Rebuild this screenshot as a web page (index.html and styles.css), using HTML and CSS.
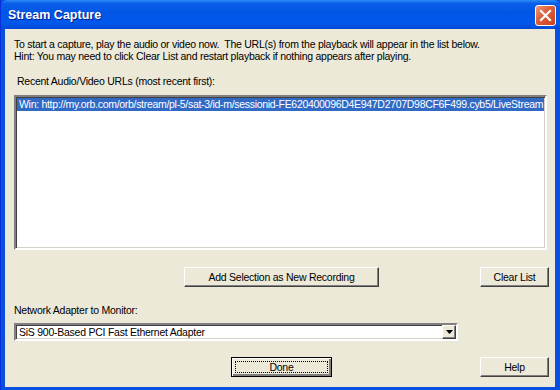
FILE: index.html
```html
<!DOCTYPE html>
<html lang="en">
<head>
    <meta charset="UTF-8">
    <title>Stream Capture</title>
    <link rel="stylesheet" href="styles.css">
</head>
<body>
    <div class="window">
        <div class="titlebar">
            <span class="title">Stream Capture</span>
            <span class="close-btn">
                <svg width="13" height="13" viewBox="0 0 13 13">
                    <path d="M2 2 L11 11 M11 2 L2 11" stroke="#fff" stroke-width="2.2" stroke-linecap="square"/>
                </svg>
            </span>
        </div>

        <div class="client">
            <p class="intro">
                To start a capture, play the audio or video now.&nbsp; The URL(s) from the playback will appear in the list below.<br>
                Hint: You may need to click Clear List and restart playback if nothing appears after playing.
            </p>

            <div class="label label-list">Recent Audio/Video URLs (most recent first):</div>
            <div class="listbox">
                <div class="list-item selected">Win: http://my.orb.com/orb/stream/pl-5/sat-3/id-m/sessionid-FE620400096D4E947D2707D98CF6F499.cyb5/LiveStream</div>
            </div>

            <div class="button-row row-add">
                <span></span>
                <button class="btn btn-add">Add Selection as New Recording</button>
                <button class="btn btn-side">Clear List</button>
            </div>

            <div class="label label-adapter">Network Adapter to Monitor:</div>
            <div class="combo">
                <span class="combo-text">SiS 900-Based PCI Fast Ethernet Adapter</span>
                <span class="combo-arrow">
                    <svg width="7" height="4" viewBox="0 0 7 4"><path d="M0 0 H7 L3.5 4 Z" fill="#000"/></svg>
                </span>
            </div>

            <div class="button-row row-done">
                <span></span>
                <button class="btn btn-done"><span class="focus">Done</span></button>
                <button class="btn btn-side">Help</button>
            </div>
        </div>
    </div>
</body>
</html>
```

FILE: styles.css
```css
body {
    margin: 0;
    width: 560px;
    height: 390px;
    overflow: hidden;
    font-family: "Liberation Sans", Arial, sans-serif;
    font-size: 10.5px;
    letter-spacing: -0.25px;
    color: #000;
}

.window {
    width: 560px;
    height: 390px;
    box-sizing: border-box;
    padding: 0 5px 3px 4px;
    background: #0a50e0;
    border-left: 1px solid #0831d9;
    display: flex;
    flex-direction: column;
}

.titlebar {
    height: 29px;
    flex: none;
    margin: 0 -5px 0 -4px;
    padding: 0 4px 0 7px;
    display: flex;
    align-items: center;
    justify-content: space-between;
    background: linear-gradient(to bottom, #2a8cf7 0%, #0a5ee8 12%, #0055e5 45%, #0058ec 80%, #0048d4 100%);
    border-radius: 6px 6px 0 0;
}

.title {
    color: #fff;
    font-weight: bold;
    font-size: 12.5px;
    letter-spacing: 0;
    text-shadow: 1px 1px 0 #0a1e8c;
    padding-top: 1px;
}

.close-btn {
    width: 19px;
    height: 19px;
    margin-top: 1px;
    border: 1px solid #fff;
    border-radius: 3px;
    background: linear-gradient(135deg, #f09a7a 0%, #e0603a 40%, #c8401c 100%);
    display: flex;
    align-items: center;
    justify-content: center;
}

.client {
    flex: 1;
    background: #ece9d8;
    padding: 0 6px 0 9px;
}

.intro {
    margin: 9px 0 0 0;
    line-height: 12px;
}

.label {
    line-height: 12px;
}

.label-list {
    margin: 13px 0 0 3px;
}

.listbox {
    height: 155px;
    box-sizing: border-box;
    margin: 8px 2px 0 0;
    background: #fff;
    border: 2px solid;
    border-color: #808080 #fff #fff #808080;
    box-shadow: inset 1px 1px 0 #404040, inset -1px -1px 0 #d4d0c8;
    padding: 1px 1px 0 1px;
}

.list-item {
    line-height: 13px;
    padding-left: 2px;
    white-space: nowrap;
    overflow: hidden;
    letter-spacing: -0.3px;
}

.list-item.selected {
    background: #316ac5;
    color: #fff;
}

.button-row {
    display: grid;
    grid-template-columns: 1fr 195px 1fr;
    align-items: start;
}

.row-add {
    margin-top: 17px;
}

.row-done {
    margin-top: 16px;
}

.btn {
    height: 20px;
    padding: 0;
    font: inherit;
    letter-spacing: inherit;
    color: #000;
    background: #ece9d8;
    border: 1px solid;
    border-color: #fff #404040 #404040 #fff;
    box-shadow: inset -1px -1px 0 #808080;
    cursor: default;
}

.btn-add {
    width: 195px;
}

.btn-side {
    width: 69px;
    justify-self: end;
}

.btn-done {
    width: 101px;
    justify-self: center;
    border: 1px solid #000;
    box-shadow: inset 1px 1px 0 #fff, inset -2px -2px 0 #808080;
    padding: 3px;
    display: flex;
}

.btn-done .focus {
    flex: 1;
    border: 1px dotted #000;
    line-height: 10px;
}

.label-adapter {
    margin-top: 17px;
}

.combo {
    width: 444px;
    height: 18px;
    box-sizing: border-box;
    margin-top: 7px;
    background: #fff;
    border: 2px solid;
    border-color: #808080 #fff #fff #808080;
    box-shadow: inset 1px 1px 0 #404040, inset -1px -1px 0 #d4d0c8;
    display: flex;
    align-items: center;
    justify-content: space-between;
    padding: 0 0 0 3px;
}

.combo-arrow {
    width: 14px;
    height: 14px;
    box-sizing: border-box;
    background: #ece9d8;
    border: 1px solid;
    border-color: #fff #404040 #404040 #fff;
    box-shadow: inset -1px -1px 0 #808080;
    display: flex;
    align-items: center;
    justify-content: center;
}
```
